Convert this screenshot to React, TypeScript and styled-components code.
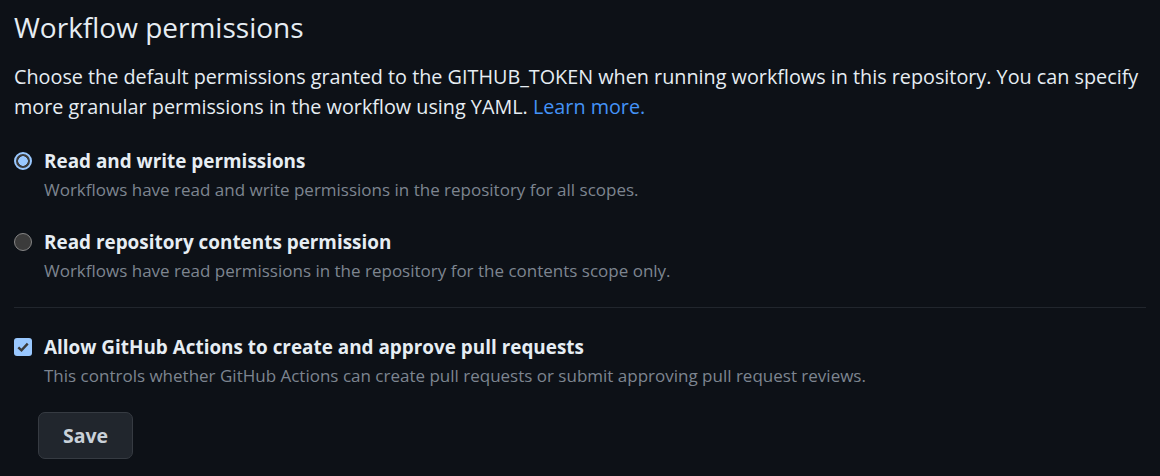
import React from "react";
import styled, { createGlobalStyle } from "styled-components";

const Global = createGlobalStyle`
  html, body { margin: 0; padding: 0; background: #0d1117; }
  body { font-family: "Open Sans", "Noto Sans", sans-serif; color: #e6edf3; }
  * { box-sizing: border-box; }
`;

const Page = styled.div`
  padding: 8px 14px 16px 14px;
  width: 1160px;
`;

const Title = styled.h2`
  margin: 0;
  font-size: 28px;
  font-weight: 400;
  line-height: 38px;
  color: #e6edf3;
`;

const Intro = styled.p`
  margin: 16px 0 0 0;
  font-size: 19.8px;
  line-height: 30px;
  color: #e6edf3;
`;

const Link = styled.a`
  color: #4493f8;
  text-decoration: none;
`;

const OptionList = styled.div`
  display: flex;
  flex-direction: column;
  gap: 28px;
  margin-top: 26px;
`;

const Option = styled.label`
  display: grid;
  grid-template-columns: 18px 1fr;
  column-gap: 12px;
  cursor: pointer;
`;

const Control = styled.span`
  display: flex;
  align-items: center;
  height: 26px;
`;

const Radio = styled.input.attrs({ type: "radio" })`
  appearance: none;
  margin: 0;
  width: 18px;
  height: 18px;
  border-radius: 50%;
  border: 1.5px solid #858585;
  background: #3b3b3b;
  &:checked {
    border: 2px solid #99c8ff;
    background: radial-gradient(circle, #99c8ff 0 4.5px, #3b3b3b 5px);
  }
`;

const Checkbox = styled.input.attrs({ type: "checkbox" })`
  appearance: none;
  margin: 0;
  width: 18px;
  height: 18px;
  border-radius: 3px;
  background: #99c8ff;
  display: block;
`;

const CheckWrap = styled.span`
  position: relative;
  width: 18px;
  height: 18px;
  svg {
    position: absolute;
    left: 0;
    top: 0;
    pointer-events: none;
  }
`;

const Text = styled.span`
  display: flex;
  flex-direction: column;
`;

const Label = styled.span`
  font-size: 18.9px;
  font-weight: 700;
  line-height: 26px;
  color: #e6edf3;
`;

const Desc = styled.span`
  margin-top: 5px;
  font-size: 17px;
  line-height: 22px;
  color: #7d8590;
`;

const Divider = styled.hr`
  border: 0;
  border-top: 1px solid #21262d;
  margin: 25px 0 26px 0;
`;

const Actions = styled.div`
  margin-top: 25px;
  padding-left: 24px;
`;

const Button = styled.button`
  width: 95px;
  height: 47px;
  border-radius: 7px;
  border: 1px solid #363b42;
  background: #21262d;
  color: #c9d1d9;
  font-family: inherit;
  font-size: 19.5px;
  font-weight: 700;
  padding: 0;
  cursor: pointer;
`;

export default function App() {
  return (
    <>
      <Global />
      <Page>
        <Title>Workflow permissions</Title>
        <Intro>
          Choose the default permissions granted to the GITHUB_TOKEN when running workflows in this
          repository. You can specify more granular permissions in the workflow using YAML.{" "}
          <Link href="#">Learn more.</Link>
        </Intro>
        <OptionList>
          <Option>
            <Control>
              <Radio name="perm" defaultChecked />
            </Control>
            <Text>
              <Label>Read and write permissions</Label>
              <Desc>Workflows have read and write permissions in the repository for all scopes.</Desc>
            </Text>
          </Option>
          <Option>
            <Control>
              <Radio name="perm" />
            </Control>
            <Text>
              <Label>Read repository contents permission</Label>
              <Desc>Workflows have read permissions in the repository for the contents scope only.</Desc>
            </Text>
          </Option>
        </OptionList>
        <Divider />
        <Option>
          <Control>
            <CheckWrap>
              <Checkbox defaultChecked />
              <svg width="18" height="18" viewBox="0 0 18 18">
                <path d="M4.3 9.3 L7.5 12.4 L13.7 5.6" fill="none" stroke="#3b3b3b" strokeWidth="2.4" />
              </svg>
            </CheckWrap>
          </Control>
          <Text>
            <Label>Allow GitHub Actions to create and approve pull requests</Label>
            <Desc>
              This controls whether GitHub Actions can create pull requests or submit approving pull
              request reviews.
            </Desc>
          </Text>
        </Option>
        <Actions>
          <Button type="button">Save</Button>
        </Actions>
      </Page>
    </>
  );
}
